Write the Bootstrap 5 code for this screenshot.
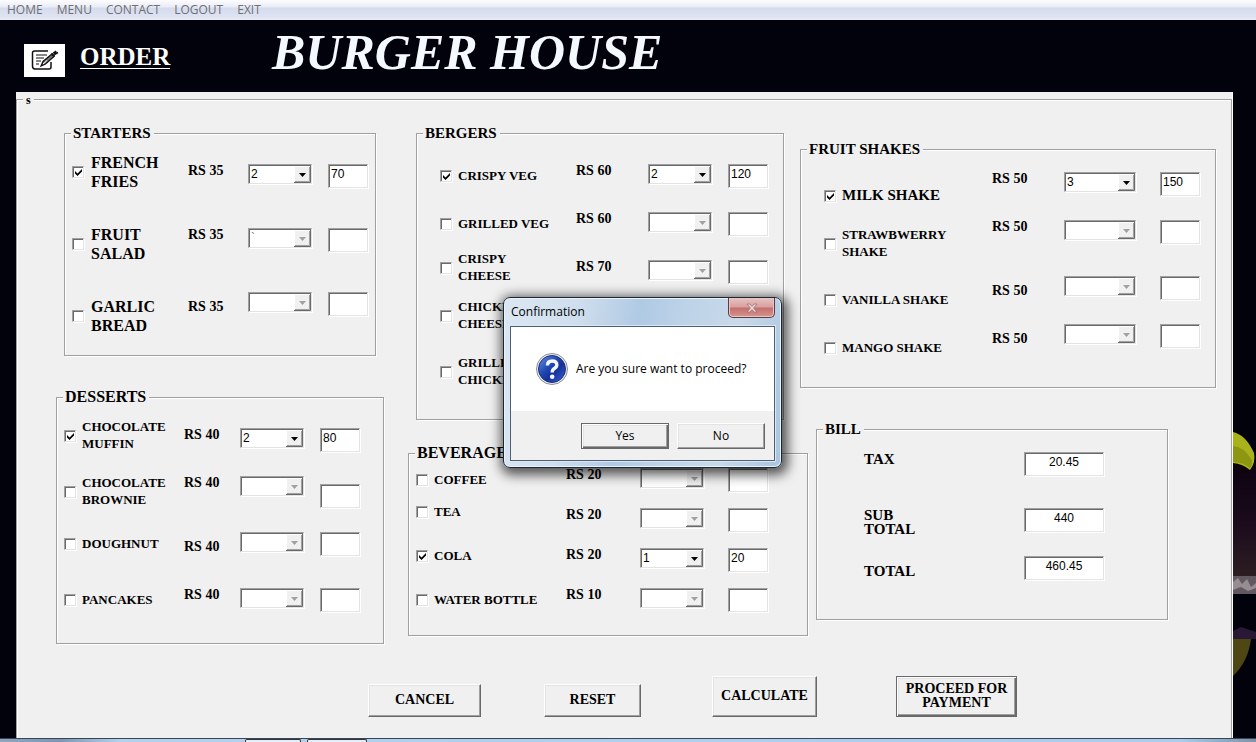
<!DOCTYPE html>
<html lang="en">
<head>
<meta charset="utf-8">
<meta name="viewport" content="width=device-width, initial-scale=1">
<title>Burger House - Order</title>
<link href="https://cdn.jsdelivr.net/npm/bootstrap@5.3.0/dist/css/bootstrap.min.css" rel="stylesheet">
<style>
  :root { --face: #f0f0f0; --line: #a0a0a0; --dark: #696969; --soft: #e3e3e3; }
  body { background: #02020c; color: #000; font-family: "Liberation Serif", "Times New Roman", serif; position: relative; }

  /* menu bar */
  .menubar { height: 20px; padding-left: 7px; gap: 14px; background: linear-gradient(#fdfdfe 0, #e9ecf6 7px, #d5dbee 8px, #dfe4f3 17px); border-bottom: 2px solid #e8eaf2; font: 12px/20px "Open Sans", "Noto Sans", sans-serif; }
  .menubar a { color: #6f6f6f; text-decoration: none; }

  /* page header */
  .masthead { height: 72px; padding-left: 24px; }
  .note-icon { width: 41px; height: 33px; margin-top: 8px; background: #fff; }
  .order-title { width: 90px; margin: 2px 0 0 15px; color: #fff; font-size: 25px; line-height: 32px; font-weight: 700; }
  .order-title span { display: block; line-height: 23px; border-bottom: 1px solid #fff; }
  .brand-title { margin: 0 0 8px 102px; color: #f4f8ff; font-size: 50px; line-height: 60px; font-style: italic; font-weight: 700; }

  .leaf-art { position: absolute; right: 0; top: 400px; z-index: 0; }

  /* form sheet */
  .sheet { position: relative; z-index: 1; margin: 0 24px 0 16px; padding-top: 7px; background: var(--face); box-shadow: 1px 0 #fff; }
  .sheet-frame { position: relative; flex: 1 0 auto; border: 1px solid var(--line); border-bottom: 0; box-shadow: inset 1px 1px #fff; padding: 33px 15px 21px 39px; }
  .sheet-frame > legend, .group > legend { position: absolute; float: none; width: auto; margin: 0; background: var(--face); font-weight: 700; white-space: nowrap; }
  .sheet-frame > legend { left: 6px; top: -8px; padding: 0 3px; font-size: 12px; line-height: 16px; }
  .board { display: grid; grid-template-columns: minmax(328px, 352fr) minmax(392px, 392fr) minmax(400px, 416fr); }
  .group { position: relative; border: 1px solid var(--line); box-shadow: 1px 1px #fff, inset 1px 1px #fff; padding: 19px 7px 10px; }
  .group > legend { left: 6px; top: -10px; padding: 0 3px 0 2px; font-size: 15px; line-height: 18px; }
  .group > legend.wide { font-size: 16px; }

  .col-one { padding-right: 24px; }
  .g-starters { margin: 0 8px 41px; --price: 60px; --gap: 16px; }
  .g-desserts { padding-right: 23px; --price: 56px; --gap: 16px; }
  .g-burgers { margin: 0 16px 33px 8px; padding: 19px 15px 18px 23px; --price: 72px; --gap: 16px; }
  .g-drinks { margin-right: -8px; padding: 3px 39px 18px 7px; --price: 74px; --gap: 24px; }
  .g-shakes { margin: 16px 0 41px; padding: 11px 15px 18px 23px; --price: 72px; --gap: 24px; }
  .g-shakes .qty { width: 72px; }
  .g-bill { margin: 0 48px 0 16px; padding: 22px 63px 15px 47px; }

  .item { display: flex; align-items: flex-start; }
  .h40 { height: 40px; } .h48 { height: 48px; } .h56 { height: 56px; } .h64 { height: 64px; }
  .pick { flex: 1 1 0; display: flex; align-items: center; gap: 6px; min-height: 38px; font-size: 13px; line-height: 17px; font-weight: 700; white-space: nowrap; }
  .pick span { padding-bottom: 2px; }
  .pick.short { min-height: 30px; }
  .pick.large { gap: 7px; font-size: 16px; line-height: 19px; }
  .pick.large span { padding-bottom: 0; }
  .pick.medium { font-size: 15px; }
  .price { flex: none; width: var(--price); font-size: 14px; line-height: 20px; font-weight: 700; }

  .sunk { appearance: none; border: 1px solid; border-color: var(--line) var(--soft) var(--soft) var(--line); border-radius: 0; background-color: #fff; box-shadow: 1px 1px #fff, inset 1px 1px var(--dark); color: #000; outline: 0; }
  .tick { flex: none; width: 12px; height: 12px; margin: 0; }
  .tick:checked { background: #fff url("data:image/svg+xml,%3Csvg xmlns='http://www.w3.org/2000/svg' width='10' height='10'%3E%3Cpath d='M2 4l2.500 2.500L9 2v2.500L4.500 9L2 6.500z' fill='%23000'/%3E%3C/svg%3E") 0 0 no-repeat; }
  .qty, .sum { flex: none; padding: 0 2px; font: 12px/16px "Liberation Sans", Arial, sans-serif; }
  .qty { width: 64px; height: 20px; margin-top: 11px; padding: 0 18px 0 2px; background: #fff url("data:image/svg+xml,%3Csvg xmlns='http://www.w3.org/2000/svg' width='17' height='17'%3E%3Cpath fill='%23f0f0f0' d='M0 0h17v17H0z'/%3E%3Cpath fill='none' stroke='%23fff' d='M.500 16V.500H16'/%3E%3Cpath fill='none' stroke='%23696969' d='M0 16.500H16.500V0'/%3E%3Cpath fill='none' stroke='%23a0a0a0' d='M1 15.500H15.500V1'/%3E%3Cpath d='M5 7h7l-3.500 4z'/%3E%3C/svg%3E") right 1px no-repeat; opacity: 1; }
  .qty:disabled { color: #777; background-image: url("data:image/svg+xml,%3Csvg xmlns='http://www.w3.org/2000/svg' width='17' height='17'%3E%3Cpath fill='%23f0f0f0' d='M0 0h17v17H0z'/%3E%3Cpath fill='none' stroke='%23fff' d='M.500 16V.500H16'/%3E%3Cpath fill='none' stroke='%23696969' d='M0 16.500H16.500V0'/%3E%3Cpath fill='none' stroke='%23a0a0a0' d='M1 15.500H15.500V1'/%3E%3Cpath fill='%23a0a0a0' d='M5 7h7l-3.500 4z'/%3E%3C/svg%3E"); }
  .sum { width: 40px; height: 24px; margin: 11px 0 0 var(--gap); padding-bottom: 5px; }
  .sum.lower { margin-top: 19px; }
  .g-bill .sum { width: 80px; margin: 0; text-align: center; }
  .bill-name { flex: 1 1 0; font-size: 15px; line-height: 14px; font-weight: 700; }

  /* raised buttons */
  .btn.raised { --bs-btn-padding-x: 4px; --bs-btn-padding-y: 0; --bs-btn-border-radius: 0; --bs-btn-color: #000; --bs-btn-bg: var(--face); --bs-btn-hover-bg: #e8e8e8; --bs-btn-hover-color: #000; border: 1px solid; border-color: #fff var(--dark) var(--dark) #fff; box-shadow: inset -1px -1px var(--line), inset 1px 1px var(--soft); }
  .btn.raised.default { border-color: var(--dark); box-shadow: inset 1px 1px #fff, inset -1px -1px var(--dark), inset -2px -2px var(--line), inset 2px 2px var(--soft); }
  .actions { margin: 32px 0 0 312px; gap: 63px; }
  .actions .btn { flex: none; font-size: 14px; line-height: 14px; font-weight: 700; height: 33px; padding-bottom: 2px; }
  .actions .tall { height: 41px; }
  .w97 { width: 97px; } .w105 { width: 105px; } .w113 { width: 113px; } .w121 { width: 121px; }

  /* message box */
  .msgbox { position: absolute; left: 503px; top: 297px; width: 279px; z-index: 5; padding: 0 6px 6px; border: 1px solid #1d2733; border-radius: 7px; background: linear-gradient(100deg, #dbe7f3 0, #cfdeed 25%, #b0cae4 45%, #bdd3e8 60%, #c9d9ea 78%, #a9c5e0 100%); box-shadow: inset 0 0 0 1px #eaf3fb, 2px 3px 12px 4px rgba(0,0,0,.65); font: 12px/16px "Open Sans", "Noto Sans", sans-serif; }
  .msg-title { height: 28px; padding-left: 1px; }
  .msg-title h2 { margin: 6px 0 0; font: inherit; }
  .btn-x { width: 47px; height: 20px; padding: 0; line-height: 0; border: 1px solid #5d3b43; border-top: 0; border-radius: 0 0 5px 5px; background: linear-gradient(#e8c3c3 0, #d9a09e 9px, #c46f6c 10px, #d59491 100%); box-shadow: inset 0 0 0 1px #e7c6c6; }
  .msg-body { border: 1px solid #4d5f73; background: #fff; box-shadow: 0 0 0 1px #dbe8f4; }
  .msg-text { height: 84px; padding-left: 25px; gap: 8px; }
  .msg-foot { height: 49px; padding: 0 9px 0 0; gap: 8px; background: var(--face); }
  .msg-foot .btn { width: 88px; height: 26px; font-size: 12px; line-height: 16px; }

  .taskbar { position: relative; z-index: 1; height: 4px; padding-left: 245px; gap: 6px; border-top: 1px solid #33465c; background: linear-gradient(90deg, #8fa6bf 0, #8196ae 60px, #b6d0ea 120px, #aecbe8 94%, #7e93a8 100%); }
  .taskbar span { width: 56px; border: 1px solid #30363e; border-bottom: 0; border-radius: 2px 2px 0 0; background: #e6edf5; }
  .taskbar span + span { width: 60px; }
</style>
</head>
<body class="d-flex flex-column min-vh-100">

<nav class="menubar d-flex" aria-label="Main">
  <a href="#">HOME</a><a href="#">MENU</a><a href="#">CONTACT</a><a href="#">LOGOUT</a><a href="#">EXIT</a>
</nav>

<header class="masthead d-flex align-items-center">
  <div class="note-icon d-flex align-items-center justify-content-center">
    <svg width="28" height="22" viewBox="0 0 28 22" fill="none" stroke="#111" stroke-width="1.500" aria-hidden="true">
      <path d="M17 2H3.500Q1.500 2 1.500 4V17Q1.500 20 4 20H18Q20 20 20 18V13"/>
      <path d="M5 6H16M5 9H13M5 12H10M5 15H8" stroke-width="1"/>
      <path d="M10 17L12 12.500L21 5L23 7.500L14.500 15Z" fill="#777" stroke-width="1.300"/>
      <path d="M20.500 4.500L23.500 7.500M22.500 3L24 5L27 3.500M23 5L25 2" stroke-width="1.800"/>
      <path d="M12 15L16 11.500" stroke="#fff" stroke-width="1"/>
    </svg>
  </div>
  <h2 class="order-title"><span>ORDER</span></h2>
  <h1 class="brand-title">BURGER HOUSE</h1>
</header>

<svg class="leaf-art" width="23" height="338" viewBox="0 0 23 338" aria-hidden="true">
  <defs><linearGradient id="dusk" x1="0" y1="0" x2="0" y2="1"><stop offset="0" stop-color="#0d0210"/><stop offset=".5" stop-color="#1a0a1c"/><stop offset="1" stop-color="#2c1d22"/></linearGradient></defs>
  <path d="M0 62H23V176H0Z" fill="url(#dusk)"/>
  <path d="M0 32Q13 35 21 53Q23 62 17 70Q10 64 0 63Z" fill="#a9b21a"/>
  <path d="M0 46Q10 46 19 60Q19 66 17 68Q10 62 0 62Z" fill="#8d9610"/>
  <path d="M0 176H23V194H0Z" fill="#625860"/>
  <path d="M0 182L5 178L9 184L14 179L18 187L23 183V188L15 191L8 187L0 190Z" fill="#988c93"/>
  <path d="M0 231L8 227L23 232V239H0Z" fill="#2a1635"/>
  <path d="M0 239H18Q15 262 0 276Z" fill="#4e4613"/>
</svg>

<main class="sheet d-flex flex-column flex-grow-1">
<fieldset class="sheet-frame">
  <legend>s</legend>
  <div class="board">

    <div class="col-one">
      <fieldset class="group g-starters">
        <legend>STARTERS</legend>
        <div class="item h64">
          <label class="pick large"><input type="checkbox" class="sunk tick" checked><span>FRENCH<br>FRIES</span></label>
          <span class="price mt-2">RS 35</span>
          <select class="sunk qty" aria-label="French fries quantity"><option>2</option></select>
          <input class="sunk sum" type="text" value="70" aria-label="French fries amount">
        </div>
        <div class="item h64">
          <label class="pick large mt-2"><input type="checkbox" class="sunk tick"><span>FRUIT<br>SALAD</span></label>
          <span class="price mt-2">RS 35</span>
          <select class="sunk qty" aria-label="Fruit salad quantity" disabled><option>`</option></select>
          <input class="sunk sum" type="text" aria-label="Fruit salad amount">
        </div>
        <div class="item h64">
          <label class="pick large mt-3"><input type="checkbox" class="sunk tick"><span>GARLIC<br>BREAD</span></label>
          <span class="price mt-3">RS 35</span>
          <select class="sunk qty" aria-label="Garlic bread quantity" disabled></select>
          <input class="sunk sum" type="text" aria-label="Garlic bread amount">
        </div>
      </fieldset>

      <fieldset class="group g-desserts">
        <legend class="wide">DESSERTS</legend>
        <div class="item h48">
          <label class="pick"><input type="checkbox" class="sunk tick" checked><span>CHOCOLATE<br>MUFFIN</span></label>
          <span class="price mt-2">RS 40</span>
          <select class="sunk qty" aria-label="Chocolate muffin quantity"><option>2</option></select>
          <input class="sunk sum" type="text" value="80" aria-label="Chocolate muffin amount">
        </div>
        <div class="item h56">
          <label class="pick mt-2"><input type="checkbox" class="sunk tick"><span>CHOCOLATE<br>BROWNIE</span></label>
          <span class="price mt-2">RS 40</span>
          <select class="sunk qty" aria-label="Chocolate brownie quantity" disabled></select>
          <input class="sunk sum lower" type="text" aria-label="Chocolate brownie amount">
        </div>
        <div class="item h56">
          <label class="pick mt-1"><input type="checkbox" class="sunk tick"><span>DOUGHNUT</span></label>
          <span class="price mt-3">RS 40</span>
          <select class="sunk qty" aria-label="Doughnut quantity" disabled></select>
          <input class="sunk sum" type="text" aria-label="Doughnut amount">
        </div>
        <div class="item h56">
          <label class="pick mt-1"><input type="checkbox" class="sunk tick"><span>PANCAKES</span></label>
          <span class="price mt-2">RS 40</span>
          <select class="sunk qty" aria-label="Pancakes quantity" disabled></select>
          <input class="sunk sum" type="text" aria-label="Pancakes amount">
        </div>
      </fieldset>
    </div>

    <div>
      <fieldset class="group g-burgers">
        <legend>BERGERS</legend>
        <div class="item h48">
          <label class="pick mt-1"><input type="checkbox" class="sunk tick" checked><span>CRISPY VEG</span></label>
          <span class="price mt-2">RS 60</span>
          <select class="sunk qty" aria-label="Crispy veg quantity"><option>2</option></select>
          <input class="sunk sum" type="text" value="120" aria-label="Crispy veg amount">
        </div>
        <div class="item h48">
          <label class="pick mt-1"><input type="checkbox" class="sunk tick"><span>GRILLED VEG</span></label>
          <span class="price mt-2">RS 60</span>
          <select class="sunk qty" aria-label="Grilled veg quantity" disabled></select>
          <input class="sunk sum" type="text" aria-label="Grilled veg amount">
        </div>
        <div class="item h48">
          <label class="pick"><input type="checkbox" class="sunk tick"><span>CRISPY<br>CHEESE</span></label>
          <span class="price mt-2">RS 70</span>
          <select class="sunk qty" aria-label="Crispy cheese quantity" disabled></select>
          <input class="sunk sum" type="text" aria-label="Crispy cheese amount">
        </div>
        <div class="item h48">
          <label class="pick"><input type="checkbox" class="sunk tick"><span>CHICKEN<br>CHEESE</span></label>
        </div>
        <div class="item h56">
          <label class="pick mt-2"><input type="checkbox" class="sunk tick"><span>GRILLED<br>CHICKEN</span></label>
        </div>
      </fieldset>

      <fieldset class="group g-drinks">
        <legend class="wide">BEVERAGES</legend>
        <div class="item h40">
          <label class="pick mt-1"><input type="checkbox" class="sunk tick"><span>COFFEE</span></label>
          <span class="price mt-2">RS 20</span>
          <select class="sunk qty" aria-label="Coffee quantity" disabled></select>
          <input class="sunk sum" type="text" aria-label="Coffee amount">
        </div>
        <div class="item h40">
          <label class="pick short"><input type="checkbox" class="sunk tick"><span>TEA</span></label>
          <span class="price mt-2">RS 20</span>
          <select class="sunk qty" aria-label="Tea quantity" disabled></select>
          <input class="sunk sum" type="text" aria-label="Tea amount">
        </div>
        <div class="item h40">
          <label class="pick"><input type="checkbox" class="sunk tick" checked><span>COLA</span></label>
          <span class="price mt-2">RS 20</span>
          <select class="sunk qty" aria-label="Cola quantity"><option>1</option></select>
          <input class="sunk sum" type="text" value="20" aria-label="Cola amount">
        </div>
        <div class="item h40">
          <label class="pick mt-1"><input type="checkbox" class="sunk tick"><span>WATER BOTTLE</span></label>
          <span class="price mt-2">RS 10</span>
          <select class="sunk qty" aria-label="Water bottle quantity" disabled></select>
          <input class="sunk sum" type="text" aria-label="Water bottle amount">
        </div>
      </fieldset>
    </div>

    <div>
      <fieldset class="group g-shakes">
        <legend>FRUIT SHAKES</legend>
        <div class="item h48">
          <label class="pick medium mt-3"><input type="checkbox" class="sunk tick" checked><span>MILK SHAKE</span></label>
          <span class="price mt-2">RS 50</span>
          <select class="sunk qty" aria-label="Milk shake quantity"><option>3</option></select>
          <input class="sunk sum" type="text" value="150" aria-label="Milk shake amount">
        </div>
        <div class="item h56">
          <label class="pick mt-3"><input type="checkbox" class="sunk tick"><span>STRAWBWERRY<br>SHAKE</span></label>
          <span class="price mt-2">RS 50</span>
          <select class="sunk qty" aria-label="Strawberry shake quantity" disabled></select>
          <input class="sunk sum" type="text" aria-label="Strawberry shake amount">
        </div>
        <div class="item h48">
          <label class="pick mt-3"><input type="checkbox" class="sunk tick"><span>VANILLA SHAKE</span></label>
          <span class="price mt-3">RS 50</span>
          <select class="sunk qty" aria-label="Vanilla shake quantity" disabled></select>
          <input class="sunk sum" type="text" aria-label="Vanilla shake amount">
        </div>
        <div class="item h56">
          <label class="pick mt-3"><input type="checkbox" class="sunk tick"><span>MANGO SHAKE</span></label>
          <span class="price mt-3">RS 50</span>
          <select class="sunk qty" aria-label="Mango shake quantity" disabled></select>
          <input class="sunk sum" type="text" aria-label="Mango shake amount">
        </div>
      </fieldset>

      <fieldset class="group g-bill">
        <legend>BILL</legend>
        <div class="item h56">
          <label class="bill-name" for="tax">TAX</label>
          <input class="sunk sum" type="text" id="tax" value="20.45">
        </div>
        <div class="item h48">
          <label class="bill-name" for="subtotal">SUB<br>TOTAL</label>
          <input class="sunk sum" type="text" id="subtotal" value="440">
        </div>
        <div class="item h48">
          <label class="bill-name mt-2" for="total">TOTAL</label>
          <input class="sunk sum" type="text" id="total" value="460.45">
        </div>
      </fieldset>
    </div>
  </div>

  <div class="actions d-flex align-items-end">
    <button type="button" class="btn raised w113">CANCEL</button>
    <button type="button" class="btn raised w97">RESET</button>
    <button type="button" class="btn raised tall w105 ms-2">CALCULATE</button>
    <button type="button" class="btn raised default tall w121 ms-3">PROCEED FOR PAYMENT</button>
  </div>
</fieldset>
</main>

<footer class="taskbar d-flex" aria-hidden="true"><span></span><span></span></footer>

<section class="msgbox" role="dialog" aria-labelledby="msg-title">
  <div class="msg-title d-flex justify-content-between align-items-start">
    <h2 id="msg-title">Confirmation</h2>
    <button type="button" class="btn-x" aria-label="Close">
      <svg width="12" height="10" viewBox="0 0 12 10" aria-hidden="true"><path d="M1 1H4L6 3.500L8 1H11L7.500 5L11 9H8L6 6.500L4 9H1L4.500 5Z" fill="#efdcdc" stroke="#9c6f73" stroke-width=".8"/></svg>
    </button>
  </div>
  <div class="msg-body">
    <div class="msg-text d-flex align-items-center">
      <svg width="32" height="32" viewBox="0 0 32 32" aria-hidden="true">
        <defs><linearGradient id="orb" x1="0" y1="0" x2="1" y2="1"><stop offset="0" stop-color="#6f93dc"/><stop offset=".4" stop-color="#2148b4"/><stop offset=".6" stop-color="#15319a"/><stop offset="1" stop-color="#3d63e0"/></linearGradient></defs>
        <circle cx="16" cy="16" r="15.500" fill="#e9ecf1" stroke="#8a8f98"/>
        <circle cx="16" cy="16" r="13.500" fill="url(#orb)" stroke="#1b2f74"/>
        <path d="M11.500 12.500Q11.500 8 16.200 8Q20.800 8 20.800 12Q20.800 14 18.300 15.500Q16.200 16.800 16.200 19.500" fill="none" stroke="#f4f6fb" stroke-width="3.400"/>
        <circle cx="16.200" cy="23.800" r="2.300" fill="#f4f6fb"/>
      </svg>
      <span>Are you sure want to proceed?</span>
    </div>
    <div class="msg-foot d-flex align-items-center justify-content-end">
      <button type="button" class="btn raised default">Yes</button>
      <button type="button" class="btn raised">No</button>
    </div>
  </div>
</section>

<script src="https://cdn.jsdelivr.net/npm/bootstrap@5.3.0/dist/js/bootstrap.bundle.min.js"></script>
</body>
</html>
